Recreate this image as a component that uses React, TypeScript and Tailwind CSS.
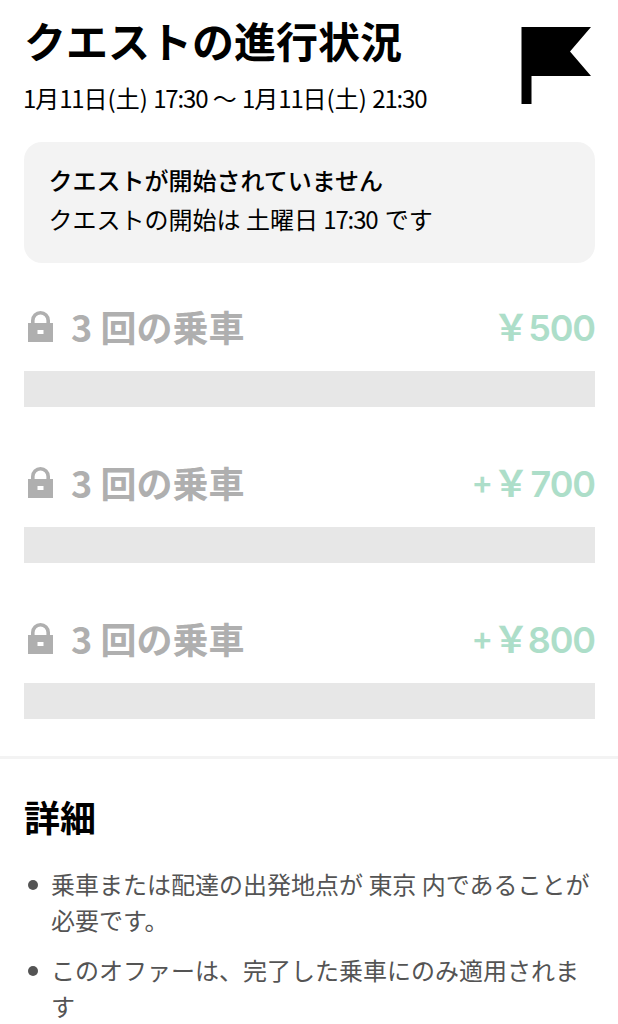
interface QuestStep {
  label: string;
  sign?: string;
  amount: string;
}

const steps: QuestStep[] = [
  { label: '3 回の乗車', amount: '500' },
  { label: '3 回の乗車', sign: '+', amount: '700' },
  { label: '3 回の乗車', sign: '+', amount: '800' },
];

const details = [
  '乗車または配達の出発地点が 東京 内であることが必要です。',
  'このオファーは、完了した乗車にのみ適用されます',
];

function FlagIcon() {
  return (
    <svg className="mt-[26.5px] h-[77.5px] w-[70px]" viewBox="0 0 70 77.5" fill="#000">
      <path d="M0.5 0H70L49 24.5L70 49H10.5V77.5H0.5Z" />
    </svg>
  );
}

function LockIcon() {
  return (
    <svg className="-mt-[2px] ml-1 h-[31px] w-[25px] shrink-0" viewBox="0 0 25 31">
      <path d="M4.8 13V9.5a7.7 7.7 0 0 1 15.4 0V13" fill="none" stroke="#afafaf" strokeWidth="3.6" />
      <path d="M0 12H25V31H0ZM9.5 19V23H15.5V19Z" fill="#afafaf" fillRule="evenodd" />
    </svg>
  );
}

// Tightens the digits inside Japanese text
function MixedText({ text }: { text: string }) {
  return (
    <>
      {text.split(/([\d:]+)/).map((part, i) =>
        i % 2 ? (
          <span key={i} className="tracking-[-1.15px]">
            {part}
          </span>
        ) : (
          part
        ),
      )}
    </>
  );
}

function QuestRow({ label, sign, amount }: QuestStep) {
  return (
    <div className="h-[156px]">
      <div className="flex h-[54px] items-center">
        <LockIcon />
        <span className="-mt-[2px] ml-[18px] flex-1 text-[36px] leading-[54px] font-bold text-[#afafaf]">{label}</span>
        <span className="flex text-[36px] leading-[54px] text-[#addec9]">
          {sign && <span className="font-['Inter'] text-[32px] font-semibold">{sign}</span>}
          <span className="-mt-[2px] mr-[-2px] font-bold">{'\uFFE5'}</span>
          <span className="mt-px min-w-[68px] text-right font-['Inter'] font-semibold tracking-[-1.1px]">{amount}</span>
        </span>
      </div>
      <div className="mt-[17px] h-9 bg-[#e7e7e7]" />
    </div>
  );
}

export default function App() {
  return (
    <div className="h-[1024px] w-[618px] overflow-hidden bg-white font-['Noto_Sans_CJK_JP',sans-serif] text-black">
      <header className="flex h-[142px] justify-between pr-[27px] pl-6">
        <div>
          <h1 className="mt-[9px] text-[42px] leading-[62px] font-bold whitespace-nowrap">クエストの進行状況</h1>
          <p className="mt-[9px] ml-[-1px] text-[24px] leading-[36px] whitespace-nowrap">
            <MixedText text="1月11日(土) 17:30 〜 1月11日(土) 21:30" />
          </p>
        </div>
        <FlagIcon />
      </header>

      <section className="mx-6 h-[120.5px] w-[571px] rounded-[18px] bg-[#f3f3f3] px-[24.5px] pt-[17.5px]">
        <p className="text-[24px] leading-[39px] font-medium">クエストが開始されていません</p>
        <p className="text-[24px] leading-[39px]">
          <MixedText text="クエストの開始は 土曜日 17:30" /> <span className="ml-[2px]">です</span>
        </p>
      </section>

      <section className="h-[493px] pt-[37.5px] pr-[23px] pl-6">
        {steps.map((step) => (
          <QuestRow key={step.amount} {...step} />
        ))}
      </section>

      <section className="border-t-[3px] border-[#f3f3f3] px-6 pt-[30px]">
        <h2 className="text-[36px] leading-[54px] font-bold">詳細</h2>
        <ul className="mt-[23.5px] flex flex-col gap-[14px] text-[24px] leading-[36px] text-[#545454]">
          {details.map((text) => (
            <li key={text} className="flex">
              <span className="mt-[14px] mr-[13px] ml-[4px] size-[10px] shrink-0 rounded-full bg-[#545454]" />
              <span className="w-[542px] shrink-0">{text}</span>
            </li>
          ))}
        </ul>
      </section>
    </div>
  );
}
